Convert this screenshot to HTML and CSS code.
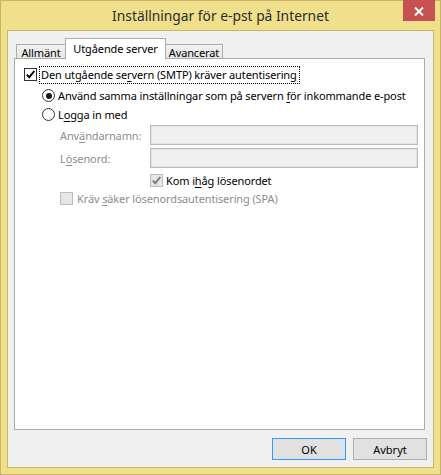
FILE: index.html
```html
<!DOCTYPE html>
<html lang="sv">
<head>
<meta charset="utf-8">
<title>Inställningar för e-pst på Internet</title>
<link rel="stylesheet" href="styles.css">
</head>
<body>
<div class="window">
  <div class="titlebar">
    <span class="title">Inställningar för e-pst på Internet</span>
    <div class="close"><svg width="10" height="9" viewBox="0 0 10 9"><path d="M1 0.5 L9 8.5 M9 0.5 L1 8.5" stroke="#fff" stroke-width="2" fill="none"/></svg></div>
  </div>
  <div class="client">
    <div class="tabs">
      <div class="tab first">Allmänt</div>
      <div class="tab active">Utgående server</div>
      <div class="tab">Avancerat</div>
    </div>
    <div class="panel">
      <div class="row row1">
        <span class="check"><svg width="11" height="11" viewBox="0 0 11 11"><path d="M1.8 5.6 L4.3 8.2 L9.3 2" stroke="#000" stroke-width="1.9" fill="none"/></svg></span>
        <span class="focus">Den utgående se<u>r</u>vern (SMTP) kräver autentisering</span>
      </div>
      <div class="row row2">
        <span class="radio on"></span>
        <span class="rlabel">Använd samma inställningar som på servern <u>f</u>ör inkommande e-post</span>
      </div>
      <div class="row row3">
        <span class="radio"></span>
        <span class="rlabel">L<u>o</u>gga in med</span>
      </div>
      <div class="row field f1">
        <span class="flabel">Anv<u>ä</u>ndarnamn:</span>
        <span class="input"></span>
      </div>
      <div class="row field f2">
        <span class="flabel">L<u>ö</u>senord:</span>
        <span class="input"></span>
      </div>
      <div class="row row6">
        <span class="check dis"><svg width="11" height="11" viewBox="0 0 11 11"><path d="M1.8 5.6 L4.3 8.2 L9.3 2" stroke="#7a7a7a" stroke-width="1.9" fill="none"/></svg></span>
        <span class="clabel">Kom i<u>h</u>åg lösenordet</span>
      </div>
      <div class="row row7">
        <span class="check dis"></span>
        <span class="clabel dim">Kräv <u>s</u>äker lösenordsautentisering (SPA)</span>
      </div>
    </div>
    <div class="buttons">
      <button class="btn default">OK</button>
      <button class="btn">Avbryt</button>
    </div>
  </div>
</div>
</body>
</html>
```
FILE: styles.css
```css
html, body { margin: 0; padding: 0; background: #fff; }
body { font-family: "Noto Sans", "Open Sans", sans-serif; font-size: 11px; color: #000; letter-spacing: -0.12px; }

.window {
  position: relative;
  width: 441px; height: 475px;
  box-sizing: border-box;
  border: 1px solid #c6b467;
  background: #f0e08b;
  padding: 0 6px 6px 6px;
  display: flex; flex-direction: column;
}
.titlebar {
  height: 29px;
  display: flex; align-items: center; justify-content: center;
}
.title {
  font-size: 13.8px; color: #2b2b2b; letter-spacing: 0;
}
.close {
  position: absolute; top: -1px; right: 5px;
  width: 32px; height: 21px;
  background: #c75050;
  display: flex; align-items: center; justify-content: center;
}
.close svg { display: block; margin-top: 1px; }

.client {
  flex: 1;
  border: 1px solid #c9b86c;
  background: #f0f0f0;
  padding: 7px 6px 7px 6px;
  display: flex; flex-direction: column;
}

.tabs {
  height: 20px;
  display: flex; align-items: flex-end;
  padding-left: 2px;
  position: relative; z-index: 1;
}
.tab {
  box-sizing: border-box;
  height: 14px;
  border: 1px solid #acacac; border-bottom: none;
  background: linear-gradient(#f2f2f2, #e6e6e6);
  display: flex; align-items: center; justify-content: center;
  font-size: 11px; line-height: 1;
  margin-left: -1px;
  padding-top: 1px;
}
.tab.first { margin-left: 0; width: 50px; }
.tab.active {
  width: 101px; height: 21px; margin-bottom: -1px;
  background: #fff;
  padding-top: 0; padding-bottom: 2px;
}
.tab:last-child { width: 58px; }

.panel {
  height: 372px;
  box-sizing: border-box;
  margin-right: 2px;
  border: 1px solid #acacac;
  background: #fff;
  padding-top: 6px;
  display: flex; flex-direction: column;
}
.row { display: flex; align-items: center; height: 19px; }
.row1 { padding-left: 9px; }
.row2 { margin-top: 2px; padding-left: 27px; }
.row3 { padding-left: 27px; }
.field { height: 20px; padding-left: 45px; }
.f1 { margin-top: 1px; }
.f2 { margin-top: 3px; }
.row6 { margin-top: 3px; height: 18px; padding-left: 135px; }
.row7 { height: 18px; padding-left: 45px; }

.check {
  box-sizing: border-box; width: 13px; height: 13px;
  border: 1px solid #333; background: #fff;
  display: flex; align-items: center; justify-content: center;
  flex: none;
}
.check svg { display: block; }
.check.dis { border-color: #bcbcbc; background: #e6e6e6; }

.focus {
  margin-left: 2px;
  border: 1px dotted #000;
  padding: 0 2px 1px 1px;
  line-height: 15px;
}
.radio {
  box-sizing: border-box; width: 13px; height: 13px;
  border: 1px solid #333; border-radius: 50%;
  background: #fff; flex: none; position: relative;
}
.radio.on::after {
  content: ""; position: absolute; left: 2.5px; top: 2.5px;
  width: 6px; height: 6px; border-radius: 50%; background: #1a1a1a;
}
.rlabel { margin-left: 3px; }

.flabel { width: 90px; color: #8d8d8d; flex: none; }
.input {
  box-sizing: border-box; width: 268px; height: 20px;
  border: 1px solid #b7bbbf;
  box-shadow: inset 0 0 0 1px #e2e4e6;
  background: #f0f0f0;
}
.clabel { margin-left: 3px; }
.clabel.dim { margin-left: 4px; color: #8d8d8d; }

.buttons {
  margin-top: 8px;
  display: flex; justify-content: flex-end; gap: 7px;
}
.btn {
  box-sizing: border-box; width: 74px; height: 22px;
  border: 1px solid #adadad; background: #e1e1e1;
  font-family: "Noto Sans", "Open Sans", sans-serif; font-size: 11px; color: #000;
  letter-spacing: 0;
  padding: 0; margin: 0;
}
.btn.default { border-color: #3399ff; }
u { text-decoration-thickness: 1px; text-underline-offset: 2px; }
```
